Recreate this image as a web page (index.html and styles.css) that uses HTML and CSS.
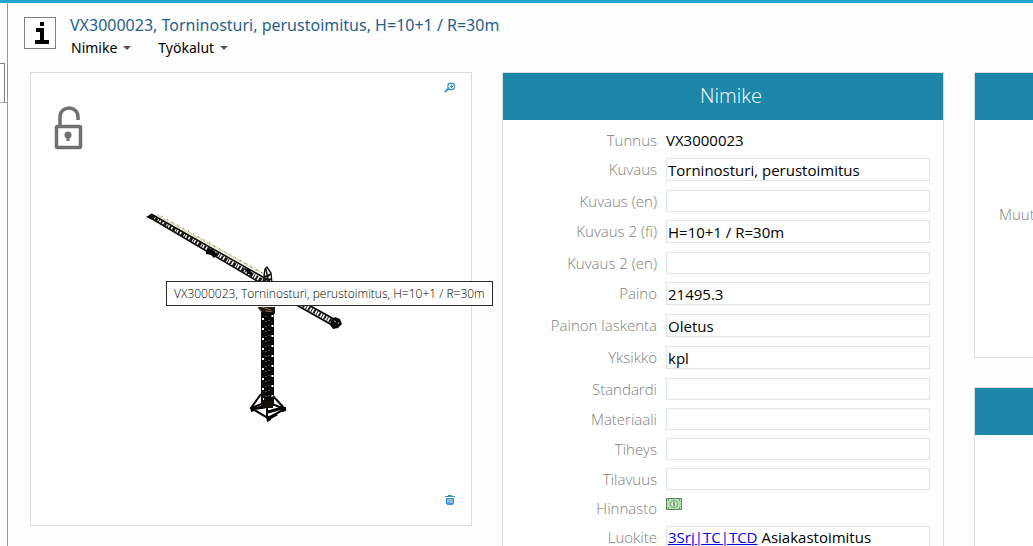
FILE: index.html
```html
<!DOCTYPE html>
<html lang="fi">
<head>
  <meta charset="UTF-8" />
  <meta name="viewport" content="width=device-width, initial-scale=1.0"/>
  <title>VX3000023, Torninosturi</title>
  <link rel="stylesheet" href="styles.css">
</head>
<body>
  <div class="app">
    <aside class="sidebar"><div class="sidebar-tab"></div></aside>

    <main class="page">
      <header class="item-header">
        <svg class="info-icon" viewBox="0 0 32 32" aria-hidden="true">
          <rect x="0.5" y="0.5" width="31" height="31" fill="#fff" stroke="#808080"/>
          <path d="M16 5h4v4h-4zM12 11h8v12h5v4H11v-4h5v-8h-4z" fill="#000"/>
        </svg>
        <div>
          <h1>VX3000023, Torninosturi, perustoimitus, H=10+1 / R=30m</h1>
          <nav class="menu">
            <button type="button">Nimike <span class="caret"></span></button>
            <button type="button">Työkalut <span class="caret"></span></button>
          </nav>
        </div>
      </header>

      <div class="columns">
        <section class="card preview">
          <svg class="crane" viewBox="146 173 210 250" aria-hidden="true">
            <!-- jib -->
            <path d="M157 214L264 273" stroke="#ddd8b8" stroke-width="2" stroke-dasharray="6 1"/>
            <path d="M162 215L264 273" stroke="#5e5a43" stroke-width="1" stroke-dasharray="1 5"/>
            <path d="M146 216l5-3 5 2-3 4z" fill="#111"/>
            <path d="M151 213L270 280M149 216L262 283" stroke="#0b0b0b" stroke-width="1.600"/>
            <path d="M152 216L266 282" stroke="#1c1a14" stroke-width="4.500" stroke-dasharray="2 1.500 3 1 1 1.500"/>
            <path d="M206 249l6-1 5 5-3 4-3-3-5-1z" fill="#000"/>
            <path d="M244 267l6 2 3 5-5-1z" fill="#000"/>
            <!-- tower head -->
            <path d="M263 283l2-15 2-2 4 6 1 11M266 268l3 15M264 276l7-3M264 279l7-1M270 273l-7 9" stroke="#111" stroke-width="1.400"/>
            <path d="M258 306h17v7h-13z" fill="#211d15"/>
            <path d="M258 307l6 6M262 306l9 3M266 310l6 1" stroke="#8b7048"/>
            <!-- counter jib -->
            <path d="M272 284L334 318M270 289L332 324" stroke="#000" stroke-width="1.600"/>
            <path d="M298 301L334 321" stroke="#222" stroke-width="5" stroke-dasharray="2 1.500 1 1.500"/>
            <path d="M331 319l4-3 5 2 2 5-4 4-5 1-3-4z" fill="#090909"/>
            <path d="M334 320l2 1M338 323l1-2" stroke="#aaa"/>
            <!-- mast -->
            <path d="M261 311h13v92h-13z" fill="#080808"/>
            <path d="M263 317v84M272.500 314v86" stroke="#fff" stroke-width="2" stroke-dasharray="2 8"/>
            <path d="M266 315v85M269 319v80" stroke="#888" stroke-width="1" stroke-dasharray="1 4"/>
            <!-- base -->
            <path d="M261 393l-10 14 17 10 17-9-12-13M251 407l16-6 18 7M267 400v17M262 396v11M273 396v9" stroke="#080808" stroke-width="2"/>
            <path d="M251 408l14-2M268 411l14-4M268 418l9-5" stroke="#000" stroke-width="3"/>
            <path d="M261 400h12v7h-12z" fill="#15120d"/>
            <path d="M250 406h5v4l-4 1zM266 415h5v4l-4 2zM282 406h4v4l-4 1z" fill="#000"/>
          </svg>
          <svg class="lock-icon" viewBox="0 0 30 44" aria-label="Auki">
            <path d="M6 20V11C6 -1 24 -1 24 11V14" stroke="#707070" stroke-width="3.500"/>
            <rect x="2.500" y="20.500" width="24" height="21" rx="1" stroke="#707070" stroke-width="3.500"/>
            <circle cx="14" cy="29" r="3.500" fill="#707070"/>
            <path d="M12.500 30h3v5h-3z" fill="#707070"/>
          </svg>
          <button type="button" class="icon-button zoom" aria-label="Suurenna">
            <svg viewBox="0 0 12 12"><path d="M5 1.500h4l1.500 1.500v3l-1.500 1.500h-4l-1-1.500v-3z" stroke="#3b93d8" stroke-width="1.300"/><path d="M7.500 3v3M6 4.500h3" stroke="#3b93d8"/><path d="M5 6L1 10" stroke="#3b93d8" stroke-width="2"/></svg>
          </button>
          <button type="button" class="icon-button delete" aria-label="Poista">
            <svg viewBox="0 0 12 12"><path d="M2 4h8v6H9v1H3v-1H2z" fill="#3b93d8"/><path d="M1 2.500h10M4 1.500h4" stroke="#3b93d8"/><path d="M4 5v4M6 5v4M8 5v4" stroke="#cfe5f7"/></svg>
          </button>
          <div class="tooltip" role="tooltip">VX3000023, Torninosturi, perustoimitus, H=10+1 / R=30m</div>
        </section>

        <section class="card">
          <h2>Nimike</h2>
          <div class="fields">
            <div class="row static"><span class="label">Tunnus</span><span>VX3000023</span></div>
            <div class="row"><label for="kuvaus">Kuvaus</label><input id="kuvaus" type="text" value="Torninosturi, perustoimitus"></div>
            <div class="row empty"><label for="kuvausEn">Kuvaus (en)</label><input id="kuvausEn" type="text"></div>
            <div class="row"><label for="kuvaus2Fi">Kuvaus 2 (fi)</label><input id="kuvaus2Fi" type="text" value="H=10+1 / R=30m"></div>
            <div class="row empty"><label for="kuvaus2En">Kuvaus 2 (en)</label><input id="kuvaus2En" type="text"></div>
            <div class="row"><label for="paino">Paino</label><input id="paino" type="text" value="21495.3"></div>
            <div class="row"><label for="laskenta">Painon laskenta</label><input id="laskenta" type="text" value="Oletus"></div>
            <div class="row"><label for="yksikko">Yksikkö</label><input id="yksikko" type="text" value="kpl"></div>
            <div class="row empty"><label for="standardi">Standardi</label><input id="standardi" type="text"></div>
            <div class="row empty"><label for="materiaali">Materiaali</label><input id="materiaali" type="text"></div>
            <div class="row empty"><label for="tiheys">Tiheys</label><input id="tiheys" type="text"></div>
            <div class="row empty"><label for="tilavuus">Tilavuus</label><input id="tilavuus" type="text"></div>
            <div class="row static price-row">
              <span class="label">Hinnasto</span>
              <button type="button" class="icon-button price" aria-label="Hinnasto">
                <svg viewBox="0 0 16 12"><rect x="0.500" y="0.500" width="15" height="11" fill="#b5dfb3" stroke="#5f8862"/><path d="M2 2h1M13 2h1M2 10h1M13 10h1" stroke="#5f8862" stroke-width="1.500"/><circle cx="8" cy="6" r="3.500" fill="#d9f0d6" stroke="#6c9b6e"/><path d="M9 4.500H7.500v1.500h1v1.500H7M8 4v4" stroke="#55805a" stroke-width="0.800"/></svg>
              </button>
            </div>
            <div class="row"><span class="label">Luokite</span><span class="value"><a href="#">3Srj|TC|TCD</a> Asiakastoimitus</span></div>
          </div>
        </section>

        <div class="stack">
          <section class="card changes">
            <h2></h2>
            <span class="label">Muut</span>
          </section>
          <section class="card more">
            <h2></h2>
          </section>
        </div>
      </div>
    </main>
  </div>
</body>
</html>
```
FILE: styles.css
```css
* {
  box-sizing: border-box;
}

body {
  margin: 0;
  overflow: hidden;
  background: #fefefe;
  color: #000;
  font-family: "Open Sans", "Noto Sans", sans-serif;
  font-size: 15px;
  line-height: 21px;
}

svg {
  display: block;
  fill: none;
}

button {
  padding: 0;
  border: none;
  background: none;
  color: inherit;
  font: inherit;
  cursor: pointer;
}

.app {
  display: flex;
  height: 100vh;
  overflow: hidden;
  border-top: 3px solid #21a5d0;
}

.sidebar {
  flex: 0 0 8px;
  padding-top: 60px;
  border-right: 1px solid #6aaabd;
}

.sidebar-tab {
  height: 40px;
  border-bottom: 1px solid #b0b0b0;
}

.sidebar-tab::before {
  content: "";
  display: block;
  width: 4px;
  height: 39px;
  border: solid #808080;
  border-width: 1px 1px 0 0;
}

.page {
  flex: 1;
  min-width: 0;
  padding: 12px 22px 0;
}

.item-header {
  display: flex;
  gap: 14px;
  height: 57px;
  margin-left: -6px;
}

.info-icon {
  width: 32px;
  height: 32px;
  margin-top: 2px;
}

h1 {
  margin: 0;
  color: #26618f;
  font-family: "Noto Sans", "Open Sans", sans-serif;
  font-size: 16px;
  font-weight: 400;
  line-height: 21px;
}

.menu {
  display: flex;
  gap: 27px;
  margin-top: 1px;
  padding-left: 1px;
  font-family: "Noto Sans", "Open Sans", sans-serif;
  font-size: 14px;
}

.menu button {
  display: flex;
  align-items: center;
  gap: 6px;
}

.caret {
  border: 4px solid transparent;
  border-top-color: #555;
  border-bottom: none;
}

.columns {
  display: grid;
  grid-template-columns: repeat(3, minmax(442px, 1fr));
  gap: 30px;
  align-items: start;
}

.card {
  border: 1px solid #dcdcdc;
  background: #fff;
}

.card h2 {
  height: 47px;
  margin: 0;
  padding-left: 16px;
  background: #1c87a8;
  color: #fff;
  font-size: 20px;
  font-weight: 300;
  line-height: 46px;
  text-align: center;
}

.preview {
  position: relative;
  display: flex;
  align-items: center;
  justify-content: center;
  min-height: 454px;
}

.crane {
  width: 210px;
  height: 250px;
}

.lock-icon {
  position: absolute;
  top: 33px;
  left: 23px;
  width: 30px;
  height: 44px;
}

.icon-button svg {
  width: 12px;
  height: 12px;
}

.zoom,
.delete {
  position: absolute;
  right: 15px;
}

.zoom {
  top: 9px;
}

.delete {
  bottom: 19px;
}

.tooltip {
  position: absolute;
  top: 208px;
  left: 135px;
  z-index: 1;
  padding: 1px 7px;
  border: 1px solid #2b2b2b;
  background: #fff;
  font-size: 12px;
  font-weight: 300;
  white-space: nowrap;
}

.fields {
  display: flex;
  flex-direction: column;
  gap: 9px;
  padding: 10px 13px;
}

.row {
  display: grid;
  grid-template-columns: 141px 1fr;
  gap: 9px;
  align-items: center;
  height: 23px;
}

.row.empty {
  height: 21px;
}

.row.static {
  height: 19px;
}

.row.price-row {
  align-items: start;
}

.row label,
.label {
  color: #808080;
  font-weight: 300;
  text-align: right;
}

.row input,
.value {
  width: 100%;
  height: 100%;
  padding: 0 1px;
  border: 1px solid #dde6ed;
  background: #fff;
  color: #000;
  font: inherit;
  line-height: 21px;
}

.value a {
  color: #0000ee;
}

.price svg {
  width: 16px;
}

.stack {
  display: flex;
  flex-direction: column;
  gap: 29px;
}

.changes {
  min-height: 286px;
}

.changes .label {
  display: block;
  padding: 84px 24px;
  text-align: left;
}

.more {
  min-height: 286px;
}
```
